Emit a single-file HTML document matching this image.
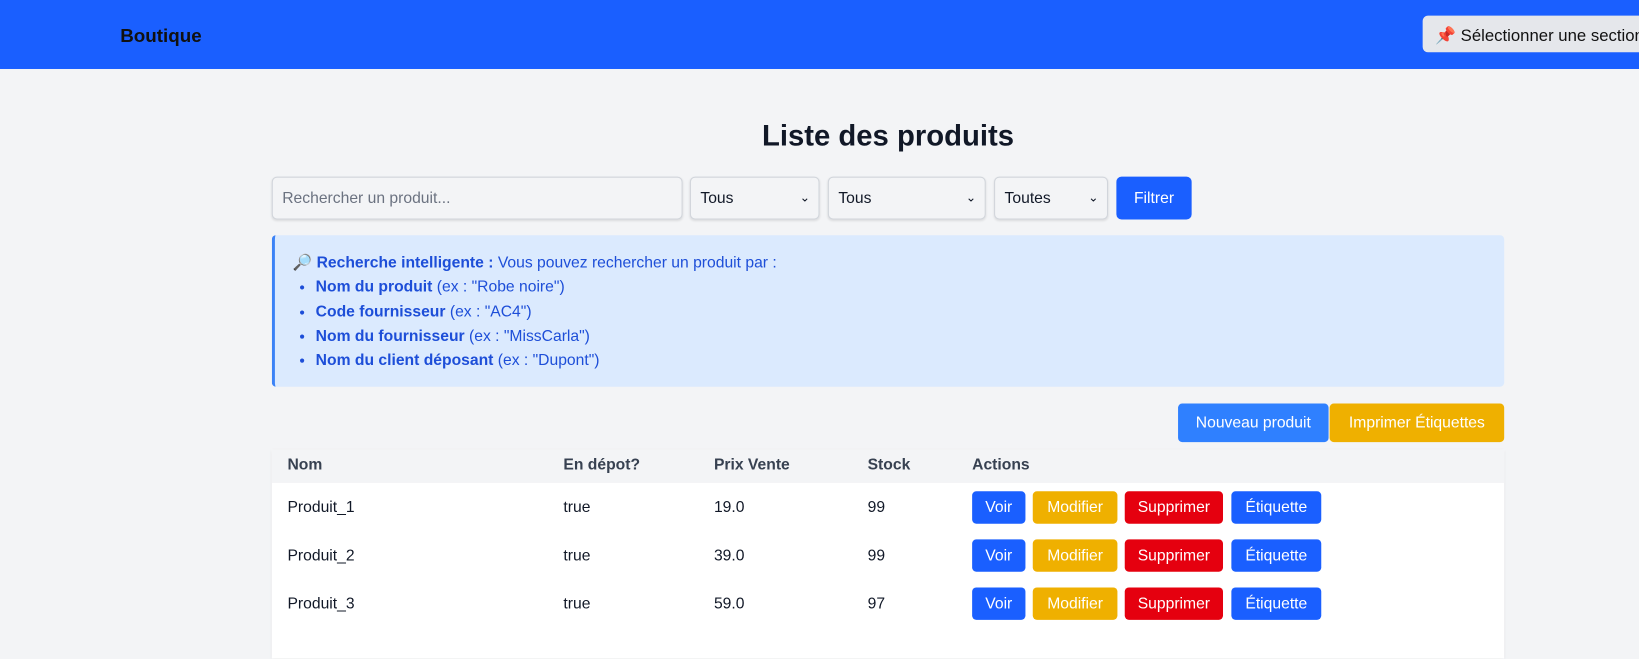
<!DOCTYPE html>
<html><head><meta charset="utf-8"><style>
*{box-sizing:border-box;margin:0;padding:0}
body{width:1639px;height:630px;overflow:hidden;background:#f3f4f6;font-family:"Liberation Sans",sans-serif;color:#111827;position:relative}
#w{position:absolute;left:0;top:0;width:1568px;height:603px;transform:scale(1.0453);transform-origin:0 0}
.nav{position:absolute;left:0;top:0;width:1568px;height:66px;background:#1a5fff}
.brand{position:absolute;left:115px;top:24px;font-weight:bold;font-size:18px;color:#111}
.sel{position:absolute;left:1361px;top:15px;width:290px;height:35px;background:#e5e7eb;border-radius:5px;font-size:16px;padding:9px 0 0 12px;color:#111}
h1{position:absolute;left:0;width:1699px;text-align:center;top:114px;font-size:28px;font-weight:bold;color:#111827}
.in{position:absolute;top:169px;height:41px;border:1px solid #d1d5db;border-radius:5px;background:#f3f4f6;box-shadow:0 1px 2px rgba(0,0,0,.1);font-size:15px;padding:11px 0 0 9px}
.arrow{position:absolute;right:8px;top:12px;font-size:12px}
.btn{position:absolute;color:#fff;font-size:15px;border-radius:4px;text-align:center}
.info{position:absolute;left:260px;top:225px;width:1179px;height:145px;background:#dbeafe;border-left:3px solid #3b82f6;border-radius:4px;color:#1d4ed8;font-size:15px;line-height:23.3px;padding:15px 0 0 17px}
.info ul{padding-left:22px}
.tbl{position:absolute;left:260px;top:430px;width:1179px;height:200px;background:#fff;box-shadow:0 1px 3px rgba(0,0,0,.1)}
.th{position:absolute;top:0;left:0;width:1179px;height:32px;background:#f3f4f6}
.c{position:absolute;font-size:15px}
.h{font-weight:bold;color:#374151;top:6px}
</style></head><body><div id="w">
<div class="nav"><div class="brand">Boutique</div><div class="sel">📌 Sélectionner une section</div></div>
<h1>Liste des produits</h1>
<div class="in" style="left:260px;width:393px;color:#6b7280">Rechercher un produit...</div>
<div class="in" style="left:660px;width:124px">Tous<span class="arrow">⌄</span></div>
<div class="in" style="left:792px;width:151px">Tous<span class="arrow">⌄</span></div>
<div class="in" style="left:951px;width:109px">Toutes<span class="arrow">⌄</span></div>
<div class="btn" style="left:1068px;top:169px;width:72px;height:41px;background:#1a5fff;padding-top:12px;border-radius:5px">Filtrer</div>
<div class="info">🔎 <b>Recherche intelligente :</b> Vous pouvez rechercher un produit par :
<ul><li><b>Nom du produit</b> (ex : "Robe noire")</li><li><b>Code fournisseur</b> (ex : "AC4")</li><li><b>Nom du fournisseur</b> (ex : "MissCarla")</li><li><b>Nom du client déposant</b> (ex : "Dupont")</li></ul></div>
<div class="btn" style="left:1127px;top:386px;width:144px;height:37px;background:#2f80ff;padding-top:10px">Nouveau produit</div>
<div class="btn" style="left:1272px;top:386px;width:167px;height:37px;background:#efb000;padding-top:10px">Imprimer Étiquettes</div>
<div class="tbl"><div class="th"></div>
<div class="c h" style="left:15px">Nom</div><div class="c h" style="left:279px">En dépot?</div><div class="c h" style="left:423px">Prix Vente</div><div class="c h" style="left:570px">Stock</div><div class="c h" style="left:670px">Actions</div>
</div>
<div id="rows"></div>
</div>
<script>
var d=[["Produit_1","19.0","99"],["Produit_2","39.0","99"],["Produit_3","59.0","97"]],h="";
d.forEach(function(r,i){var y=470+i*46;
h+='<div class="c" style="left:275px;top:'+(y+7)+'px">'+r[0]+'</div><div class="c" style="left:539px;top:'+(y+7)+'px">true</div><div class="c" style="left:683px;top:'+(y+7)+'px">'+r[1]+'</div><div class="c" style="left:830px;top:'+(y+7)+'px">'+r[2]+'</div>';
[[930,51,"#1a5fff","Voir"],[988,81,"#efb000","Modifier"],[1076,94,"#e5000f","Supprimer"],[1178,86,"#1a5fff","Étiquette"]].forEach(function(b){
h+='<div class="btn" style="left:'+b[0]+'px;top:'+y+'px;width:'+b[1]+'px;height:31px;background:'+b[2]+';padding-top:7px">'+b[3]+'</div>';});});
document.getElementById("rows").innerHTML=h;
</script>
</body></html>
